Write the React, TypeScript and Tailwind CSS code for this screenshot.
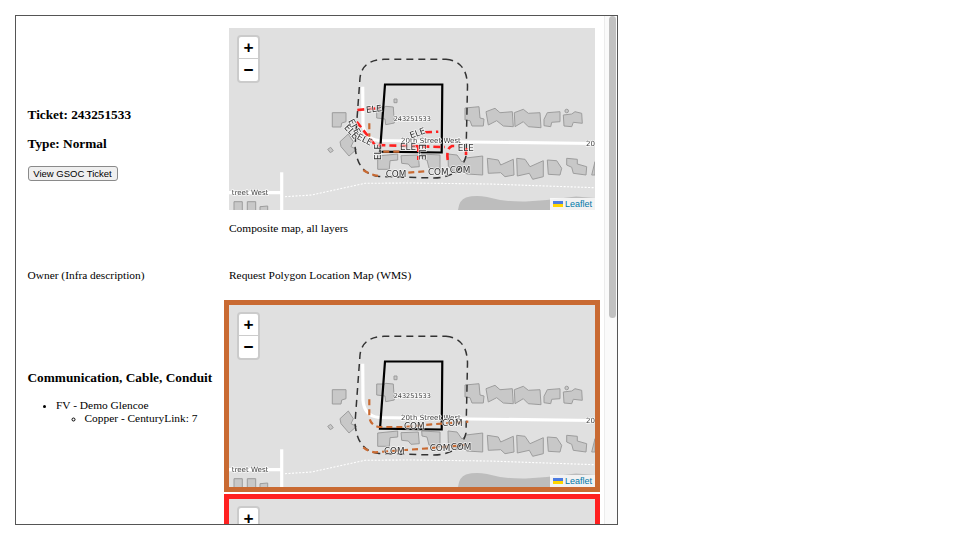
const buildings = [
  "103.3,84.7 117,84.7 117,93.7 112.7,95 112,99 103.3,99",
  "111,113.7 119.3,106 124.3,113.7 122,118.7 127.7,121.3 120,128 112,118.7",
  "98.7,121.3 101.7,119.3 104.3,122.7 101.3,124.7",
  "165,71 168,71 168,74.7 165,74.7",
  "147.7,79 156,79 156.7,78.3 164.3,79 165.3,95 156.7,96.7 156,91 147.7,90",
  "148.7,128 168.7,126 168.7,132 161,132.7 160.3,141.3 148.7,141.3",
  "172,127.7 189.3,127 190.3,138.7 182,139.3 179.3,136 172.7,135.3",
  "192.7,126 211,127 211,142 200,140 198,132 193,131",
  "219,126 228,127 233,134 237,130 253.7,128 253.7,147 238,146 234,143 226,145 219.3,138",
  "236,80 250,78.7 251,90 255,91 254.3,98 243,98 241,92.7 236,92",
  "257,83.7 266,80.3 271,84.7 283.3,83.7 284.3,98.7 274.3,98 267.7,92.7 259.3,97",
  "285.3,84.7 294.3,81.3 299.3,85.3 311,84.7 312,99.7 299.3,98.7 294.3,93.7 286,98.7",
  "315,91.3 318.3,84.7 331,83.7 331,93.7 322.7,94.3 321.7,98.7 315,97.7",
  "334.3,87 342.7,86 346,83.7 352.7,85.3 353.3,95.3 344.3,94.3 342.7,98.7 335,98",
  "258.3,130.3 269.3,132 271.7,137 284.3,131.3 285,147 276,148.7 271.7,144.7 259.3,145.3",
  "287.7,130.3 296,131.3 301,138.7 314.3,132.7 314.3,148.7 303.7,151.3 300.3,145.3 288.3,148",
  "318.3,132 327.7,132.7 332.7,140.3 331,147 319.3,146.3",
  "337.7,130.3 348.3,131.3 348.3,136 357.7,138.7 357,147 344.3,145.3 342.7,139.3 337.7,137",
  "362.7,147 366,133.7 366,147",
  "5,173.7 13.3,173.7 13.3,183 5,183",
  "18.3,173.7 26.7,173.7 26.7,183 18.3,183",
  "31,178.7 38.7,178 38.7,183 31,183",
];

type Lab = [string, number, number, number];

const eleLabels: Lab[] = [
  ["ELE", 145, 81.5, -8],
  ["ELE", 125, 99, 62],
  ["ELE", 122, 104, 48],
  ["ELE", 135.5, 112, 28],
  ["ELE", 149.5, 124, -90],
  ["ELE", 179, 119, 0],
  ["ELE", 188.7, 105.5, -20],
  ["ELE", 192, 124, 90],
  ["ELE", 236.7, 120.5, 0],
  ["COM", 167, 146.5, 0],
  ["COM", 209.3, 144, 0],
  ["COM", 231, 142, 0],
];

const comLabels: Lab[] = [
  ["COM", 185.3, 121, 0],
  ["COM", 223.3, 118.5, 0],
  ["COM", 165.3, 146, 0],
  ["COM", 211, 143.5, 0],
  ["COM", 232, 142.5, 0],
];

function MapLabel({ t, x, y, r }: { t: string; x: number; y: number; r: number }) {
  return (
    <text
      x={x}
      y={y}
      transform={`rotate(${r} ${x} ${y})`}
      textAnchor="middle"
      dominantBaseline="middle"
      fontSize="8.8"
      fill="#333"
      stroke="#fff"
      strokeOpacity="0.7"
      strokeWidth="1.4"
      paintOrder="stroke"
      fontFamily="'DejaVu Sans', sans-serif"
    >
      {t}
    </text>
  );
}

function RoadLabel({ x, y, size, children, anchor = "middle" }: { x: number; y: number; size: number; children: string; anchor?: "middle" | "start" }) {
  return (
    <text
      x={x}
      y={y}
      textAnchor={anchor}
      dominantBaseline="middle"
      fontSize={size}
      fill="#444"
      stroke="#fff"
      strokeOpacity="0.8"
      strokeWidth="1.4"
      paintOrder="stroke"
      fontFamily="'DejaVu Sans', sans-serif"
    >
      {children}
    </text>
  );
}

function MapView({ layer }: { layer: "all" | "com" | "ele" }) {
  const labels = layer === "com" ? comLabels : eleLabels;
  return (
    <div className="relative w-[366px] h-[182px] bg-[#e0e0e0] overflow-hidden">
      <svg width="366" height="182" viewBox="0 0 366 182" className="block blur-[0.3px]">
        <path d="M229 182 Q230 172 237 169.5 Q246 167 258 169 Q275 174 297 173.5 Q322 172 347 168.5 L366 170 L366 182 Z" fill="#bdbdbd" />
        <g fill="none" stroke="#fff" strokeWidth="3.2">
          <path d="M133.7 58.7 L134 95 Q135 111 150 112.5 L240 114 L366 115.5" />
          <path d="M52.7 144.3 L52.7 182" />
          <path d="M0 164.7 L52 164.7" />
        </g>
        <path
          d="M56 168.7 L82.7 167 L110 161 L136 155.3 L181 155 L260 156 L366 159.7"
          fill="none"
          stroke="#fff"
          strokeWidth="1.1"
          strokeDasharray="2 1.5"
        />
        <g fill="#c8c8c8" stroke="#9c9c9c" strokeWidth="1">
          {buildings.map((p) => (
            <polygon key={p} points={p} />
          ))}
          <circle cx="337.7" cy="83" r="1.8" />
        </g>
        <path
          d="M217 31.3 Q238 33 238.5 58 L237 128 Q232 149 205 150 L150 148.5 Q128 146 126 118 L131 50 Q133 32 155 31.3 Z"
          fill="none"
          stroke="#333"
          strokeWidth="1.5"
          strokeDasharray="7 5"
        />
        <polygon points="156,56.5 213.3,56.5 212.7,124.5 151,123.7" fill="none" stroke="#000" strokeWidth="2.2" />
        {layer === "com" ? (
          <g fill="none" stroke="#c96a32" strokeWidth="2.2" strokeDasharray="6 4">
            <path d="M140.3 94.3 L140.3 111.7 Q141 120 150 122 L176 122 L202.7 119.3 L239.3 116.7" />
            <path d="M134.3 142.3 Q140 147 146 147.3 L176 145 L199.3 143.3 L236 140" />
          </g>
        ) : (
          <g fill="none" strokeWidth="2.6">
            <g stroke="#c96a32" strokeWidth="2.2" strokeDasharray="6 4">
              <path d="M140.3 95.3 L140.3 108.7" />
              <path d="M154.3 123.7 L172.7 123.7" />
              <path d="M134.3 142 Q142 147.5 151 148 M179.3 144.7 L199.3 143" />
            </g>
            <g stroke="#ff2020" strokeDasharray="7 4">
              <path d="M128.3 82 L151 80" />
              <path d="M127.7 93.7 L146 117 L212.7 119 L216 119" />
              <path d="M218.7 132 Q217 120 223 118 L230 118" />
              <path d="M196 104.3 L209.3 103.7" />
              <path d="M189.3 117 L189.3 132" />
              <path d="M237 120 L237 131" />
            </g>
          </g>
        )}
        <RoadLabel x={183.3} y={91} size={6.5}>243251533</RoadLabel>
        <RoadLabel x={202} y={112.7} size={7.1}>20th Street West</RoadLabel>
        <RoadLabel x={21} y={164.7} size={7.1}>treet West</RoadLabel>
        <RoadLabel x={357} y={116} size={7.1} anchor="start">20</RoadLabel>
        {labels.map(([t, x, y, r], i) => (
          <MapLabel key={i} t={t} x={x} y={y} r={r} />
        ))}
      </svg>
      <div className="absolute left-2 top-[7px] w-[23px] rounded-[4px] border-2 border-[#cbcbcb] bg-white font-['DejaVu_Sans_Mono',monospace] font-bold text-black">
        <div className="h-[22px] flex items-center justify-center text-[16px] leading-none border-b border-[#ccc]">+</div>
        <div className="h-[22px] flex items-center justify-center text-[16px] leading-none">−</div>
      </div>
      <div className="absolute right-0 bottom-0 h-[12px] pl-[3px] pr-[3px] bg-white/80 flex items-center gap-[1px] text-[9px] leading-none text-[#0078a8] font-['Liberation_Sans',sans-serif]">
        <svg width="10" height="6" viewBox="0 0 10 6" className="mr-px">
          <rect width="10" height="3" fill="#4c7be1" />
          <rect y="3" width="10" height="3" fill="#ffd500" />
        </svg>
        Leaflet
      </div>
    </div>
  );
}

function FramedMap({ color, layer }: { color: string; layer: "com" | "ele" }) {
  return (
    <div className={`w-fit border-[5px] ${color}`}>
      <MapView layer={layer} />
    </div>
  );
}

export default function App() {
  return (
    <div className="w-[960px] h-[540px] bg-white pt-[15px] pl-[15px] font-['Liberation_Serif',serif] text-[11.4px] text-black">
      <div className="w-[603px] h-[510px] border border-[#555] flex overflow-hidden">
        <div className="w-[588px] shrink-0 overflow-hidden">
          <div className="grid grid-cols-[213px_375px]">
            <div className="pl-[11.5px] pt-[91px]">
              <h3 className="text-[13.3px] leading-4 font-bold">Ticket: 243251533</h3>
              <h3 className="text-[13.3px] leading-4 font-bold mt-[13px]">Type: Normal</h3>
              <button className="block mt-[14px] h-[15px] w-[90px] bg-[#efefef] border border-[#8a8a8a] rounded-[3px] text-[9.5px] leading-none font-['Liberation_Sans',sans-serif]">
                View GSOC Ticket
              </button>
            </div>
            <div className="pt-3 h-[252px]">
              <MapView layer="all" />
              <p className="mt-[11px] leading-[14px]">Composite map, all layers</p>
            </div>

            <div className="pl-[11.5px] h-[32px] leading-[14px]">Owner (Infra description)</div>
            <div className="h-[32px] leading-[14px]">Request Polygon Location Map (WMS)</div>

            <div className="pl-[11.5px] h-[194px] pt-[70px]">
              <h3 className="text-[13.3px] leading-4 font-bold whitespace-nowrap">Communication, Cable, Conduit</h3>
              <ul className="mt-[13px] pl-[28.5px] list-disc leading-[13px]">
                <li>
                  FV - Demo Glencoe
                  <ul className="pl-[28.5px] list-[circle]">
                    <li>Copper - CenturyLink: 7</li>
                  </ul>
                </li>
              </ul>
            </div>
            <div className="-ml-[5px] h-[194px]">
              <FramedMap color="border-[#c96a32]" layer="com" />
            </div>

            <div />
            <div className="-ml-[5px]">
              <FramedMap color="border-[#ff2020]" layer="ele" />
            </div>
          </div>
        </div>
        <div className="flex-1 bg-[#fafafa] border-l border-[#ececec] pl-[4px] pr-[1px]">
          <div className="w-[7px] h-[302px] rounded-full bg-[#c1c1c1]" />
        </div>
      </div>
    </div>
  );
}
